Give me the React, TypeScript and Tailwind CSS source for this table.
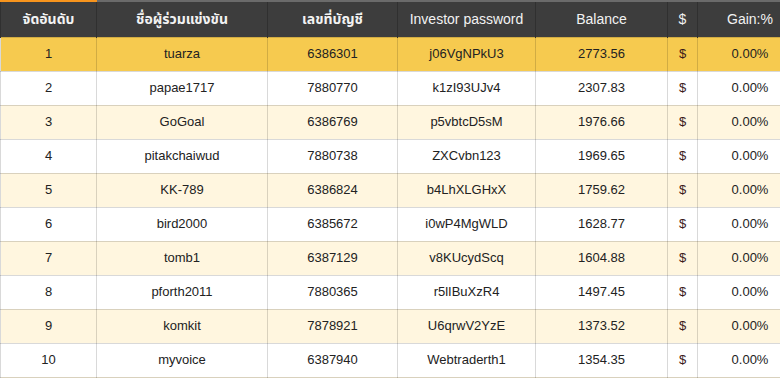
const rows = [
  { rank: 1, name: 'tuarza', account: '6386301', password: 'j06VgNPkU3', balance: '2773.56' },
  { rank: 2, name: 'papae1717', account: '7880770', password: 'k1zI93UJv4', balance: '2307.83' },
  { rank: 3, name: 'GoGoal', account: '6386769', password: 'p5vbtcD5sM', balance: '1976.66' },
  { rank: 4, name: 'pitakchaiwud', account: '7880738', password: 'ZXCvbn123', balance: '1969.65' },
  { rank: 5, name: 'KK-789', account: '6386824', password: 'b4LhXLGHxX', balance: '1759.62' },
  { rank: 6, name: 'bird2000', account: '6385672', password: 'i0wP4MgWLD', balance: '1628.77' },
  { rank: 7, name: 'tomb1', account: '6387129', password: 'v8KUcydScq', balance: '1604.88' },
  { rank: 8, name: 'pforth2011', account: '7880365', password: 'r5lIBuXzR4', balance: '1497.45' },
  { rank: 9, name: 'komkit', account: '7878921', password: 'U6qrwV2YzE', balance: '1373.52' },
  { rank: 10, name: 'myvoice', account: '6387940', password: 'Webtraderth1', balance: '1354.35' },
];

const headers = ['จัดอันดับ', 'ชื่อผู้ร่วมแข่งขัน', 'เลขที่บัญชี', 'Investor password', 'Balance', '$', 'Gain:%'];

export default function App() {
  return (
    <div className="w-[780px] h-[378px] overflow-hidden bg-white" style={{ fontFamily: '"Liberation Sans", "Noto Sans Thai", "Noto Sans", Arial, sans-serif' }}>
      <table className="w-[802px] border-collapse table-fixed">
        <colgroup>
          <col className="w-[96px]" />
          <col className="w-[171px]" />
          <col className="w-[130px]" />
          <col className="w-[138px]" />
          <col className="w-[132px]" />
          <col className="w-[30px]" />
          <col className="w-[105px]" />
        </colgroup>
        <thead>
          <tr className="bg-[#3d3d3d] h-[36px]">
            {headers.map((h, i) => (
              <th key={h}
                className={`border-t-2 ${i === 0 ? 'border-t-[#f7941d]' : 'border-t-[#6b6b6b]'} border-x border-x-[#303030] text-[14px] text-[#f2f2f2] text-center whitespace-nowrap p-0 ${i < 3 ? 'font-bold' : 'font-normal'}`}>
                {h}
              </th>
            ))}
          </tr>
        </thead>
        <tbody>
          {rows.map(r => {
            const bg = r.rank === 1 ? 'bg-[#f6ca4f]' : r.rank % 2 === 1 ? 'bg-[#fff6df]' : 'bg-white';
            return (
              <tr key={r.rank} className={`${bg} h-[34px] text-[13px] text-[#222]`}>
                <td className="border border-black/15 text-center p-0">{r.rank}</td>
                <td className="border border-black/15 text-center p-0">{r.name}</td>
                <td className="border border-black/15 text-center p-0">{r.account}</td>
                <td className="border border-black/15 text-center p-0">{r.password}</td>
                <td className="border border-black/15 text-center p-0">{r.balance}</td>
                <td className="border border-black/15 text-center p-0 text-[#3a1a1a]">$</td>
                <td className="border border-black/15 text-center p-0">0.00%</td>
              </tr>
            );
          })}
          {/* next row peeks in below the fold */}
          <tr className="bg-[#fff6df] h-[34px]">
            {headers.map(h => <td key={h} className="border border-black/15 p-0" />)}
          </tr>
        </tbody>
      </table>
    </div>
  );
}
